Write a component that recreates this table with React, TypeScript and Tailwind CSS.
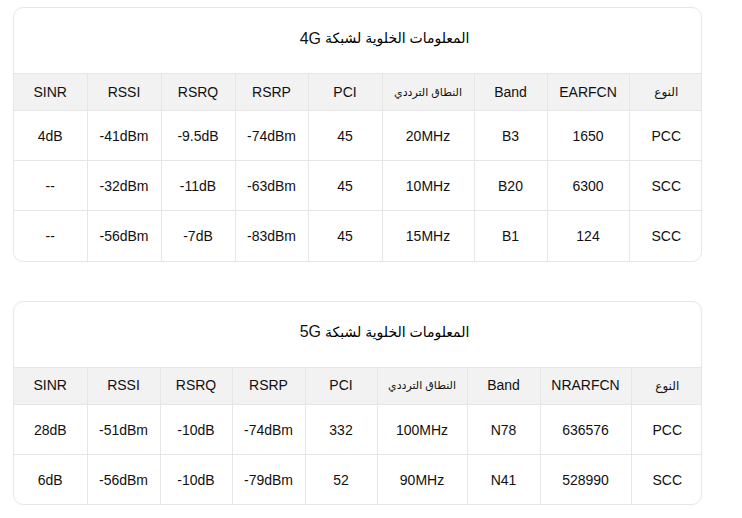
import React from "react";

type Card = {
  title: string;
  net: string;
  cols: { label: string; w: number; ar?: boolean; sm?: boolean }[];
  rows: string[][];
};

const cards: Card[] = [
  {
    title: "المعلومات الخلوية لشبكة",
    net: "4G",
    cols: [
      { label: "النوع", w: 74, ar: true },
      { label: "EARFCN", w: 82 },
      { label: "Band", w: 73 },
      { label: "النطاق الترددي", w: 92, ar: true, sm: true },
      { label: "PCI", w: 74 },
      { label: "RSRP", w: 73 },
      { label: "RSRQ", w: 74 },
      { label: "RSSI", w: 74 },
      { label: "SINR", w: 73 },
    ],
    rows: [
      ["PCC", "1650", "B3", "20MHz", "45", "-74dBm", "-9.5dB", "-41dBm", "4dB"],
      ["SCC", "6300", "B20", "10MHz", "45", "-63dBm", "-11dB", "-32dBm", "--"],
      ["SCC", "124", "B1", "15MHz", "45", "-83dBm", "-7dB", "-56dBm", "--"],
    ],
  },
  {
    title: "المعلومات الخلوية لشبكة",
    net: "5G",
    cols: [
      { label: "النوع", w: 72, ar: true },
      { label: "NRARFCN", w: 91 },
      { label: "Band", w: 73 },
      { label: "النطاق الترددي", w: 90, ar: true, sm: true },
      { label: "PCI", w: 72 },
      { label: "RSRP", w: 73 },
      { label: "RSRQ", w: 72 },
      { label: "RSSI", w: 73 },
      { label: "SINR", w: 73 },
    ],
    rows: [
      ["PCC", "636576", "N78", "100MHz", "332", "-74dBm", "-10dB", "-51dBm", "28dB"],
      ["SCC", "528990", "N41", "90MHz", "52", "-79dBm", "-10dB", "-56dBm", "6dB"],
    ],
  },
];

function CellCard({ card }: { card: Card }) {
  return (
    <div className="w-[689px] rounded-[10px] border border-[#e6e6e6] bg-white overflow-hidden">
      <div
        className="h-[65px] pb-[4px] flex items-center justify-center pl-[54px] text-[16px] text-[#111]"
        dir="rtl"
      >
        <span className="text-[14px] font-medium text-black">{card.title}</span>
        <span className="mr-[4px]">{card.net}</span>
      </div>
      <table dir="rtl" className="w-full table-fixed border-collapse text-[14px] text-[#111]">
        <colgroup>
          {card.cols.map((c, i) => (
            <col key={i} style={{ width: c.w }} />
          ))}
        </colgroup>
        <thead>
          <tr className="h-[37px] bg-[#f2f2f2]">
            {card.cols.map((c, i) => (
              <th
                key={i}
                className={
                  "font-normal border-t border-[#e6e6e6] border-l last:border-l-0 text-center " +
                  (c.sm ? "text-[11px]" : c.ar ? "text-[12px]" : "text-[14px]")
                }
              >
                {c.label}
              </th>
            ))}
          </tr>
        </thead>
        <tbody>
          {card.rows.map((r, ri) => (
            <tr key={ri} className="h-[50px]">
              {r.map((v, ci) => (
                <td
                  key={ci}
                  className="border-t border-[#e6e6e6] border-l last:border-l-0 text-center pt-[2px]"
                >
                  <span dir="ltr">{v}</span>
                </td>
              ))}
            </tr>
          ))}
        </tbody>
      </table>
    </div>
  );
}

export default function App() {
  return (
    <div
      className="min-h-[518px] bg-white pl-[13px] pt-[7px] flex flex-col gap-[39px]"
      style={{ fontFamily: '"Liberation Sans", "DejaVu Sans", sans-serif' }}
    >
      {cards.map((c, i) => (
        <CellCard key={i} card={c} />
      ))}
    </div>
  );
}
